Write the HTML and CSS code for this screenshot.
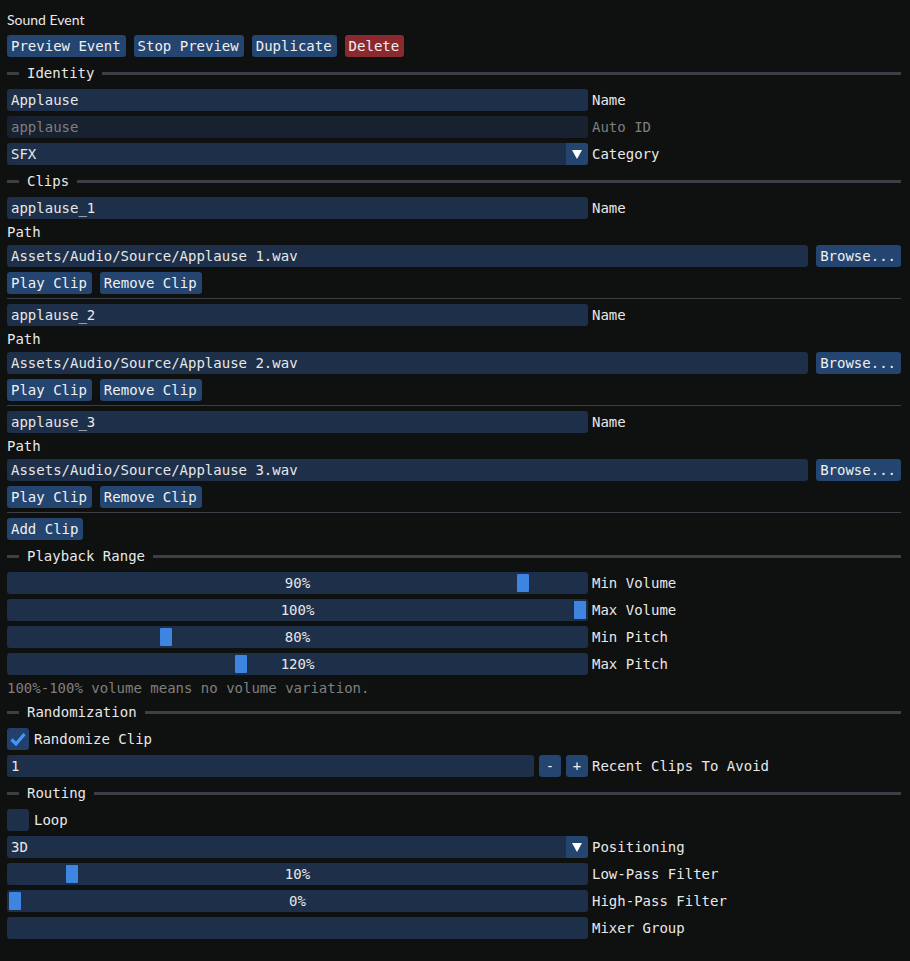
FILE: index.html
```html
<!DOCTYPE html>
<html lang="en">
<head>
    <meta charset="UTF-8">
    <meta name="viewport" content="width=device-width, initial-scale=1.0">
    <title>Sound Event</title>
    <link rel="stylesheet" href="styles.css">
</head>
<body>

<div class="panel">
    <div class="title">Sound Event</div>

    <div class="toolbar">
        <button class="btn">Preview Event</button>
        <button class="btn">Stop Preview</button>
        <button class="btn">Duplicate</button>
        <button class="btn danger">Delete</button>
    </div>

    <!-- Identity -->
    <div class="sep-title"><span>Identity</span></div>
    <div class="row">
        <div class="field">Applause</div>
        <span class="lbl">Name</span>
    </div>
    <div class="row">
        <div class="field disabled">applause</div>
        <span class="lbl muted">Auto ID</span>
    </div>
    <div class="row">
        <div class="field combo">
            <span class="combo-text">SFX</span>
            <span class="arrow"><svg width="12" height="12" viewBox="0 0 12 12"><path d="M1 2 L11 2 L6 11 Z" fill="#fff"/></svg></span>
        </div>
        <span class="lbl">Category</span>
    </div>

    <!-- Clips -->
    <div class="sep-title"><span>Clips</span></div>

    <div class="row">
        <div class="field">applause_1</div>
        <span class="lbl">Name</span>
    </div>
    <div class="text">Path</div>
    <div class="path-row">
        <div class="field grow">Assets/Audio/Source/Applause 1.wav</div>
        <button class="btn">Browse...</button>
    </div>
    <div class="toolbar">
        <button class="btn">Play Clip</button>
        <button class="btn">Remove Clip</button>
    </div>
    <div class="sep"></div>

    <div class="row">
        <div class="field">applause_2</div>
        <span class="lbl">Name</span>
    </div>
    <div class="text">Path</div>
    <div class="path-row">
        <div class="field grow">Assets/Audio/Source/Applause 2.wav</div>
        <button class="btn">Browse...</button>
    </div>
    <div class="toolbar">
        <button class="btn">Play Clip</button>
        <button class="btn">Remove Clip</button>
    </div>
    <div class="sep"></div>

    <div class="row">
        <div class="field">applause_3</div>
        <span class="lbl">Name</span>
    </div>
    <div class="text">Path</div>
    <div class="path-row">
        <div class="field grow">Assets/Audio/Source/Applause 3.wav</div>
        <button class="btn">Browse...</button>
    </div>
    <div class="toolbar">
        <button class="btn">Play Clip</button>
        <button class="btn">Remove Clip</button>
    </div>
    <div class="sep"></div>

    <div class="toolbar">
        <button class="btn">Add Clip</button>
    </div>

    <!-- Playback Range -->
    <div class="sep-title"><span>Playback Range</span></div>
    <div class="row">
        <div class="field slider">90%<span class="grab" style="left: calc(2px + (100% - 16px) * 0.9)"></span></div>
        <span class="lbl">Min Volume</span>
    </div>
    <div class="row">
        <div class="field slider">100%<span class="grab" style="left: calc(2px + (100% - 16px) * 1)"></span></div>
        <span class="lbl">Max Volume</span>
    </div>
    <div class="row">
        <div class="field slider">80%<span class="grab" style="left: calc(2px + (100% - 16px) * 0.2667)"></span></div>
        <span class="lbl">Min Pitch</span>
    </div>
    <div class="row">
        <div class="field slider">120%<span class="grab" style="left: calc(2px + (100% - 16px) * 0.4)"></span></div>
        <span class="lbl">Max Pitch</span>
    </div>
    <div class="text muted">100%-100% volume means no volume variation.</div>

    <!-- Randomization -->
    <div class="sep-title"><span>Randomization</span></div>
    <div class="check-row">
        <span class="checkbox checked"><svg width="18" height="18" viewBox="0 0 18 18"><path d="M2.5 9.5 L7 14 L15.5 4" fill="none" stroke="#4296fa" stroke-width="3.2"/></svg></span>
        <span class="lbl">Randomize Clip</span>
    </div>
    <div class="row">
        <div class="int-input">
            <div class="field grow">1</div>
            <button class="btn square">-</button>
            <button class="btn square">+</button>
        </div>
        <span class="lbl">Recent Clips To Avoid</span>
    </div>

    <!-- Routing -->
    <div class="sep-title"><span>Routing</span></div>
    <div class="check-row">
        <span class="checkbox"></span>
        <span class="lbl">Loop</span>
    </div>
    <div class="row">
        <div class="field combo">
            <span class="combo-text">3D</span>
            <span class="arrow"><svg width="12" height="12" viewBox="0 0 12 12"><path d="M1 2 L11 2 L6 11 Z" fill="#fff"/></svg></span>
        </div>
        <span class="lbl">Positioning</span>
    </div>
    <div class="row">
        <div class="field slider">10%<span class="grab" style="left: calc(2px + (100% - 16px) * 0.1)"></span></div>
        <span class="lbl">Low-Pass Filter</span>
    </div>
    <div class="row">
        <div class="field slider">0%<span class="grab" style="left: calc(2px + (100% - 16px) * 0)"></span></div>
        <span class="lbl">High-Pass Filter</span>
    </div>
    <div class="row">
        <div class="field"></div>
        <span class="lbl">Mixer Group</span>
    </div>
</div>

</body>
</html>
```

FILE: styles.css
```css
body {
    margin: 0;
    background-color: #0f1010;
    color: #e8e8e8;
    font-family: "DejaVu Sans Mono", monospace;
    font-size: 14px;
}
.panel {
    display: flex;
    flex-direction: column;
    gap: 5px;
    padding: 9px 9px 0 7px;
}
.title {
    font-family: "Lato", "DejaVu Sans", sans-serif;
    font-size: 14px;
    height: 22px;
    line-height: 22px;
    margin-bottom: -1px;
}
.toolbar {
    display: flex;
    gap: 8px;
}
.btn {
    font-family: inherit;
    font-size: 14px;
    color: #f0f0f0;
    background-color: #234570;
    border: none;
    border-radius: 3px;
    height: 22px;
    padding: 0 5px 0 4px;
    line-height: 22px;
    cursor: pointer;
}
.btn.danger {
    background-color: #8b2a2e;
}
.btn.square {
    width: 22px;
    padding: 0;
    flex: none;
}
.sep-title {
    display: flex;
    align-items: center;
    height: 22px;
    gap: 8px;
}
.sep-title::before {
    content: "";
    width: 12px;
    height: 3px;
    background-color: #3e3e47;
}
.sep-title::after {
    content: "";
    flex: 1;
    height: 3px;
    background-color: #3e3e47;
}
.sep {
    height: 1px;
    background-color: #3e3e47;
    margin-top: -1px;
}
.row {
    display: flex;
    align-items: center;
}
.field {
    width: 581px;
    height: 22px;
    line-height: 22px;
    padding: 0 4px;
    box-sizing: border-box;
    background-color: #1d2f49;
    border-radius: 3px;
    white-space: nowrap;
}
.field.grow {
    flex: 1;
    width: auto;
}
.field.disabled {
    background-color: #172130;
    color: #7f7f7f;
}
.lbl {
    margin-left: 4px;
}
.muted {
    color: #7f7f7f;
}
.text {
    height: 16px;
    line-height: 16px;
}
.combo {
    display: flex;
    padding-right: 0;
    overflow: hidden;
}
.combo-text {
    flex: 1;
}
.arrow {
    width: 22px;
    display: flex;
    align-items: center;
    justify-content: center;
    background-color: #234570;
}
.path-row {
    display: flex;
    gap: 8px;
}
.slider {
    position: relative;
    text-align: center;
}
.grab {
    position: absolute;
    top: 2px;
    bottom: 2px;
    width: 12px;
    background-color: #3d85e0;
    border-radius: 1px;
}
.check-row {
    display: flex;
    align-items: center;
}
.checkbox {
    width: 22px;
    height: 22px;
    border-radius: 3px;
    background-color: #1d2f49;
    display: flex;
    align-items: center;
    justify-content: center;
}
.checkbox.checked {
    background-color: #22406a;
}
.checkbox + .lbl {
    margin-left: 5px;
}
.int-input {
    width: 581px;
    display: flex;
    gap: 5px;
}
```
